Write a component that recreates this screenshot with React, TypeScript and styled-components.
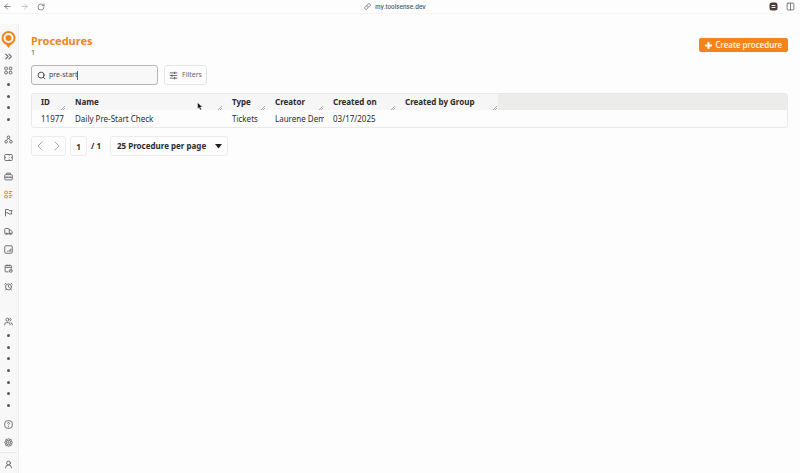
import React from "react";
import styled, { createGlobalStyle } from "styled-components";
import {
  ArrowLeft, ArrowRight, RotateCw, Link, ChevronsRight, ChevronLeft, ChevronRight,
  Truck, AlarmClock, Users, UserRound, Columns2, Search,
} from "lucide-react";

const Global = createGlobalStyle`
  *, *::before, *::after { box-sizing: border-box; }
  html, body { margin: 0; background: #fdfdfd; }
  body { font-family: "Noto Sans", sans-serif; font-size: 8px; line-height: 12px; color: #2b2b2b; }
  button, input, select { font: inherit; color: inherit; margin: 0; }
`;

const Page = styled.div`
  min-height: 100vh;
  display: flex;
  flex-direction: column;
`;

const BrowserBar = styled.header`
  height: 14px;
  display: grid;
  grid-template-columns: 1fr auto 1fr;
  align-items: center;
  padding: 0 5px 0 3px;
  border-bottom: 1px solid #f7f5f3;
`;

const BarGroup = styled.div<{ $end?: boolean; $gap: number }>`
  display: flex;
  align-items: center;
  justify-content: ${(p) => (p.$end ? "flex-end" : "flex-start")};
  gap: ${(p) => p.$gap}px;
`;

const PlainButton = styled.button<{ $color?: string }>`
  display: flex;
  align-items: center;
  justify-content: center;
  padding: 0;
  border: 0;
  background: none;
  color: ${(p) => p.$color ?? "#5c5c5c"};
`;

const Address = styled.a`
  display: flex;
  align-items: center;
  gap: 4px;
  padding-right: 8px;
  font: 500 6px/12px Inter, sans-serif;
  color: #4c4c4c;
  text-decoration: none;
`;

const Body = styled.div`
  flex: 1;
  display: flex;
  padding-top: 10px;
`;

const Sidebar = styled.nav`
  flex: none;
  width: 19px;
  display: flex;
  flex-direction: column;
  padding: 6px 1px 0 0;
  background: #f8f8f8;
  border-right: 1px solid #efefef;
`;

const NavLink = styled.a<{ $height?: number; $active?: boolean }>`
  height: ${(p) => (p.$height ? `${p.$height}px` : "auto")};
  display: flex;
  align-items: center;
  justify-content: center;
  color: ${(p) => (p.$active ? "#f28a1e" : "#6a6a6a")};
`;

const NavGroup = styled.div<{ $height: number; $before?: number }>`
  height: ${(p) => p.$height}px;
  margin-top: ${(p) => p.$before ?? 0}px;
  display: grid;
  grid-auto-rows: 1fr;
`;

const Dot = styled.span`
  width: 3px;
  height: 3px;
  border-radius: 50%;
  background: #555;
`;

const Account = styled.div`
  margin-top: auto;
  padding: 2px 0 1px;
  border-top: 1px solid #eaeaea;
`;

const Main = styled.main`
  flex: 1;
  min-width: 0;
  padding: 10px 12px 12px;
`;

const TitleRow = styled.div`
  display: flex;
  justify-content: space-between;
  align-items: flex-start;
`;

const Title = styled.h1`
  margin: 0;
  font-size: 11px;
  line-height: 14px;
  font-weight: 700;
  color: #ef8625;
`;

const Count = styled.div`
  font-size: 7px;
  line-height: 10px;
  color: #555;
`;

const CreateButton = styled.button`
  height: 14px;
  margin-top: 4px;
  padding: 0 6px;
  display: flex;
  align-items: center;
  gap: 3px;
  border: 0;
  border-radius: 2px;
  background: #f3841b;
  color: #fff;
  font-weight: 500;
`;

const Tools = styled.div`
  display: flex;
  gap: 6px;
  margin-top: 7px;
`;

const SearchBox = styled.label`
  width: 127px;
  height: 20px;
  display: flex;
  align-items: center;
  padding: 0 5px;
  border: 1px solid #b5b5b5;
  border-radius: 3px;
  background: #f8f8f8;
  color: #444;
`;

const SearchInput = styled.input`
  field-sizing: content;
  margin-left: 3px;
  padding: 0;
  border: 0;
  outline: 0;
  background: none;
  font-size: 7px;
  caret-color: transparent;
`;

const TextCaret = styled.span`
  width: 1px;
  height: 9px;
  background: #666;
`;

const FilterButton = styled.button`
  height: 20px;
  padding: 0 4px;
  display: flex;
  align-items: center;
  gap: 4px;
  border: 1px solid #e4e4e4;
  border-radius: 3px;
  background: #fdfdfd;
  font-size: 7px;
  color: #666;
`;

const TableFrame = styled.div`
  margin-top: 8px;
  border: 1px solid #e9e9e9;
  border-radius: 3px;
  overflow: hidden;
`;

const Table = styled.table`
  width: 100%;
  table-layout: fixed;
  border-collapse: collapse;
`;

const Col = styled.col<{ $width?: number }>`
  width: ${(p) => (p.$width ? `${p.$width}px` : "auto")};
`;

const Th = styled.th`
  position: relative;
  height: 16px;
  padding: 0 0 0 9px;
  background: #f6f6f6;
  text-align: left;
  font-weight: 700;
  white-space: nowrap;
`;

const FillerTh = styled.th`
  padding: 0;
  background: #ececeb;
`;

const Grip = styled.svg`
  position: absolute;
  right: 1px;
  bottom: 0;
`;

const Td = styled.td`
  height: 17px;
  padding: 0 0 0 9px;
  overflow: hidden;
  white-space: nowrap;
`;

const Pager = styled.div`
  display: flex;
  align-items: center;
  margin-top: 8px;
  font-weight: 700;
`;

const Steps = styled.div`
  width: 35px;
  height: 20px;
  display: flex;
  align-items: center;
  justify-content: space-around;
  border: 1px solid #ececec;
  border-radius: 3px;
`;

const PageInput = styled.input`
  width: 17px;
  height: 20px;
  margin: 0 4px;
  padding: 0;
  border: 1px solid #ececec;
  border-radius: 3px;
  background: none;
  text-align: center;
`;

const PageSize = styled.div`
  display: grid;
  align-items: center;
  width: 118px;
  height: 20px;
  margin-left: 9px;
  border: 1px solid #ececec;
  border-radius: 3px;
`;

const PageSizeSelect = styled.select`
  grid-area: 1 / 1;
  height: 18px;
  padding: 0 0 0 6px;
  appearance: none;
  border: 0;
  background: none;
`;

const Caret = styled.svg`
  grid-area: 1 / 1;
  justify-self: end;
  margin-right: 5px;
  pointer-events: none;
`;

const Pointer = styled.svg`
  position: absolute;
  right: 20px;
  top: 8px;
`;

const Glyph = ({ children, size = 9 }: { children: React.ReactNode; size?: number }) => (
  <svg width={size} height={size} viewBox="0 0 24 24" fill="none" stroke="currentColor" strokeWidth="2.5" strokeLinejoin="round" aria-hidden="true">
    {children}
  </svg>
);

const Logo = () => (
  <svg width="15" height="17" viewBox="0 0 30 34" aria-hidden="true">
    <path d="M8 24h14l-7 9Z" fill="#ee8420" stroke="#ee8420" strokeWidth="1" strokeLinejoin="round" />
    <circle cx="15" cy="14" r="12" fill="#fbf7f2" stroke="#ee8420" strokeWidth="4" />
    <circle cx="15" cy="14" r="6" fill="#ee8420" />
  </svg>
);

const GridIcon = () => (
  <Glyph>
    <rect x="2" y="3" width="7" height="7" rx="2" /><rect x="14" y="3" width="7" height="7" rx="2" />
    <rect x="2" y="14" width="7" height="7" rx="2" /><rect x="14" y="14" width="7" height="7" rx="2" />
  </Glyph>
);
const ShapesIcon = () => (
  <Glyph><circle cx="12" cy="6" r="3.500" /><circle cx="5.500" cy="18" r="3.500" /><circle cx="18.500" cy="18" r="3.500" /><path d="M10 10l-3 4M14 10l3 4" /></Glyph>
);
const TicketIcon = () => (
  <Glyph><rect x="2" y="4" width="20" height="16" rx="2" /><path d="M2 12h3M19 12h3M14 6v2M14 11v2M14 16v2" /></Glyph>
);
const CaseIcon = () => (
  <Glyph><rect x="2" y="7" width="20" height="14" rx="2" /><path d="M7 7V3h10v4M2 14h20M8 12v4M16 12v4" /></Glyph>
);
const ListIcon = () => (
  <Glyph><rect x="2" y="3" width="7" height="7" rx="1" /><rect x="2" y="15" width="7" height="6" rx="1" /><path d="M13 4h9M13 9h6M13 15h9M13 20h6" strokeWidth="3" /></Glyph>
);
const FlagIcon = () => (
  <Glyph><path d="M4 22V4h8l2 3h8l-3 4 2 5h-8l-2-3H4" /></Glyph>
);
const ChartIcon = () => (
  <Glyph><rect x="2" y="2" width="20" height="20" rx="3" /><path d="M10 18v-3M14 18v-5M18 18V10" /></Glyph>
);
const CalendarIcon = () => (
  <Glyph><path d="M12 21H5a2 2 0 0 1-2-2V6a2 2 0 0 1 2-2h13a2 2 0 0 1 2 2v6M3 9h17M8 1v5M15 1v5" /><circle cx="18" cy="18" r="4" /><path d="M18 16v2l2 1" /></Glyph>
);
const HelpIcon = () => (
  <Glyph><rect x="2" y="2" width="20" height="20" rx="7" /><path d="M9.500 9a2.500 2.500 0 1 1 3.500 2.500c-1 .5-1 1-1 2.500M12 16v2" /></Glyph>
);
const GearIcon = () => (
  <Glyph><path d="M12 1.500l3 2 4 .5.500 4 3 4-3 4-.5 4-4 .5-3 2-3-2-4-.5-.5-4-3-4 3-4 .5-4 4-.5Z" /><circle cx="12" cy="12" r="6" /><circle cx="12" cy="12" r="2" /></Glyph>
);

const navItems = [
  { label: "Assets", icon: <ShapesIcon /> },
  { label: "Tickets", icon: <TicketIcon /> },
  { label: "Work", icon: <CaseIcon /> },
  { label: "Procedures", icon: <ListIcon />, active: true },
  { label: "Locations", icon: <FlagIcon /> },
  { label: "Vehicles", icon: <Truck size={9} strokeWidth={2.5} /> },
  { label: "Reports", icon: <ChartIcon /> },
  { label: "Schedule", icon: <CalendarIcon /> },
  { label: "Reminders", icon: <AlarmClock size={9} strokeWidth={2.5} /> },
];

const columns = [
  { name: "ID", width: 34, value: "11977" },
  { name: "Name", width: 157, value: "Daily Pre-Start Check" },
  { name: "Type", width: 43, value: "Tickets" },
  { name: "Creator", width: 58, value: "Laurene Demo" },
  { name: "Created on", width: 72, value: "03/17/2025" },
  { name: "Created by Group", width: 102, value: "" },
];

const Dots = ({ count }: { count: number }) => (
  <>
    {Array.from({ length: count }, (_, i) => (
      <NavLink key={i} href="#" aria-label={`Shortcut ${i + 1}`}><Dot /></NavLink>
    ))}
  </>
);

export default function App() {
  return (
    <Page>
      <Global />
      <BrowserBar>
        <BarGroup $gap={8}>
          <PlainButton aria-label="Back"><ArrowLeft size={9} /></PlainButton>
          <PlainButton aria-label="Forward" $color="#b5b5b5"><ArrowRight size={9} /></PlainButton>
          <PlainButton aria-label="Reload"><RotateCw size={8} /></PlainButton>
        </BarGroup>
        <Address href="#"><Link size={7} />my.toolsense.dev</Address>
        <BarGroup $gap={8} $end>
          <PlainButton aria-label="Extension">
            <svg width="9" height="9" viewBox="0 0 18 18"><rect x="1" y="1" width="16" height="16" rx="5" fill="#4a3a38" /><path d="M5 7h8M5 11h8" stroke="#eee" strokeWidth="2" /></svg>
          </PlainButton>
          <PlainButton aria-label="Split view"><Columns2 size={9} /></PlainButton>
        </BarGroup>
      </BrowserBar>
      <Body>
        <Sidebar aria-label="Main">
          <NavLink href="#" $height={19} aria-label="Home"><Logo /></NavLink>
          <NavLink href="#" $height={14} aria-label="Expand"><ChevronsRight size={11} strokeWidth={2.5} /></NavLink>
          <NavLink href="#" $height={14} aria-label="Dashboard"><GridIcon /></NavLink>
          <NavGroup $height={46} $before={2}><Dots count={4} /></NavGroup>
          <NavGroup $height={166} $before={5}>
            {navItems.map((n) => (
              <NavLink key={n.label} href="#" aria-label={n.label} $active={n.active}>{n.icon}</NavLink>
            ))}
          </NavGroup>
          <NavGroup $height={18} $before={16}>
            <NavLink href="#" aria-label="Users"><Users size={9} strokeWidth={2.5} /></NavLink>
          </NavGroup>
          <NavGroup $height={81}><Dots count={7} /></NavGroup>
          <NavGroup $height={37} $before={4}>
            <NavLink href="#" aria-label="Help"><HelpIcon /></NavLink>
            <NavLink href="#" aria-label="Settings"><GearIcon /></NavLink>
          </NavGroup>
          <Account>
            <NavLink href="#" $height={18} aria-label="Account"><UserRound size={9} strokeWidth={2.5} /></NavLink>
          </Account>
        </Sidebar>
        <Main>
          <TitleRow>
            <div>
              <Title>Procedures</Title>
              <Count>1</Count>
            </div>
            <CreateButton>
              <svg width="7" height="7" viewBox="0 0 7 7" aria-hidden="true"><path d="M3.500 0v7M0 3.500h7" stroke="#fff" strokeWidth="2" /></svg>
              Create procedure
            </CreateButton>
          </TitleRow>
          <Tools>
            <SearchBox>
              <Search size={9} strokeWidth={2.5} />
              <SearchInput aria-label="Search" defaultValue="pre-start" autoFocus />
              <TextCaret />
            </SearchBox>
            <FilterButton>
              <Glyph><path d="M2 5h20M2 12h20M2 19h20" /><path d="M15 2v6M8 9v6M15 16v6" strokeWidth="3" /></Glyph>
              Filters
            </FilterButton>
          </Tools>
          <TableFrame>
            <Table>
              <colgroup>
                {columns.map((c) => <Col key={c.name} $width={c.width} />)}
                <Col />
              </colgroup>
              <thead>
                <tr>
                  {columns.map((c) => (
                    <Th key={c.name} scope="col">
                      {c.name}
                      <Grip width="4" height="4" viewBox="0 0 4 4"><path d="M0 4L4 0M2 4l2-2" stroke="#888" strokeWidth="0.700" /></Grip>
                      {c.name === "Name" && (
                        <Pointer width="6" height="9" viewBox="0 0 12 18"><path d="M1 1v13l3-3 2 5 3-1-2-5h4Z" fill="#111" stroke="#fff" strokeWidth="1" /></Pointer>
                      )}
                    </Th>
                  ))}
                  <FillerTh />
                </tr>
              </thead>
              <tbody>
                <tr>
                  {columns.map((c) => <Td key={c.name}>{c.value}</Td>)}
                  <Td />
                </tr>
              </tbody>
            </Table>
          </TableFrame>
          <Pager>
            <Steps>
              <PlainButton aria-label="Previous page" $color="#aaa"><ChevronLeft size={16} strokeWidth={1.5} /></PlainButton>
              <PlainButton aria-label="Next page" $color="#aaa"><ChevronRight size={16} strokeWidth={1.5} /></PlainButton>
            </Steps>
            <PageInput aria-label="Page" defaultValue="1" />
            <span>/ 1</span>
            <PageSize>
              <PageSizeSelect aria-label="Page size">
                <option>25 Procedure per page</option>
              </PageSizeSelect>
              <Caret width="7" height="5" viewBox="0 0 7 5"><path d="M0 0h7L3.500 4.500Z" fill="#222" /></Caret>
            </PageSize>
          </Pager>
        </Main>
      </Body>
    </Page>
  );
}
